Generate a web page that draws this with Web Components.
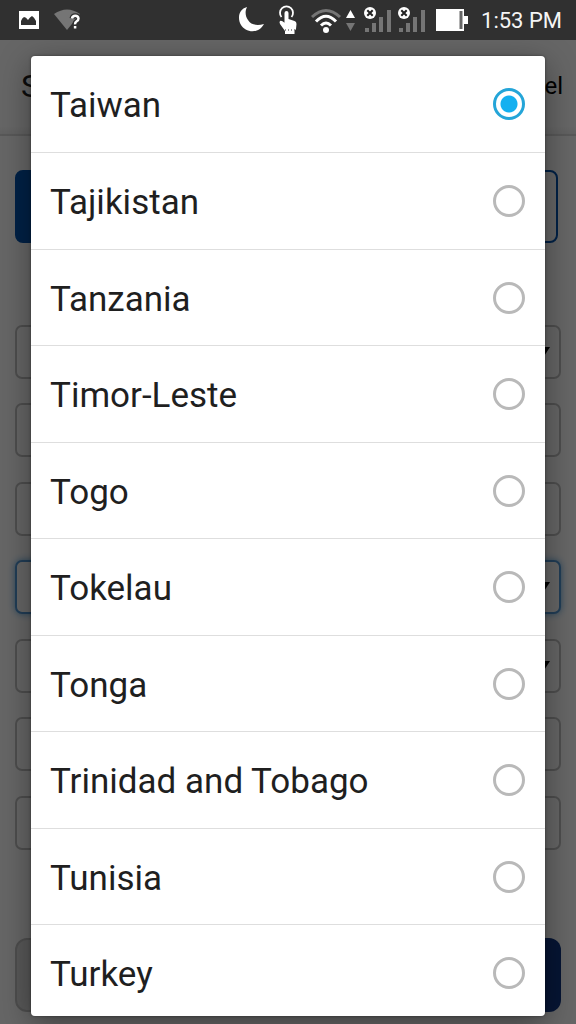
<!DOCTYPE html>
<html lang="en">
<head>
<meta charset="utf-8">
<meta name="viewport" content="width=device-width, initial-scale=1">
<title>Choose a country</title>
<style>
html, body { height: 100%; margin: 0; }
body { font-family: Roboto, "Noto Sans", sans-serif; color: #1f1f1f; background: #fff; overflow: hidden; }
</style>
</head>
<body>
<phone-screen>
  <status-bar slot="status" time="1:53 PM"></status-bar>
  <address-form slot="page"></address-form>
  <choice-dialog slot="dialog" label="Country" selected="Taiwan"
    options="Taiwan,Tajikistan,Tanzania,Timor-Leste,Togo,Tokelau,Tonga,Trinidad and Tobago,Tunisia,Turkey"></choice-dialog>
</phone-screen>
<script>
class BaseElement extends HTMLElement {
  connectedCallback() {
    if (this.shadowRoot) return;
    this.attachShadow({ mode: 'open' }).innerHTML = this.render();
  }
}

customElements.define('phone-screen', class extends BaseElement {
  render() {
    return `<style>
      :host { display: flex; flex-direction: column; height: 100%; }
      main { flex: 1; min-height: 0; display: grid; grid-template: minmax(0, 1fr) / minmax(0, 1fr); }
      .page, .scrim { grid-area: 1 / 1; min-height: 0; overflow: hidden; }
      .scrim { z-index: 1; display: grid; grid-template: minmax(0, 1fr) / minmax(0, 1fr);
        box-sizing: border-box; padding: 16px 31px 8px; background: rgba(0, 0, 0, .6); }
    </style>
    <slot name="status"></slot>
    <main>
      <div class="page"><slot name="page"></slot></div>
      <div class="scrim"><slot name="dialog"></slot></div>
    </main>`;
  }
});

customElements.define('status-bar', class extends BaseElement {
  render() {
    const signal = `<svg width="30" height="28" viewBox="0 0 30 28">
      <g fill="#757575"><rect x="1" y="22" width="4" height="4"/><rect x="8" y="17" width="4" height="9"/>
      <rect x="15" y="11" width="4" height="15"/><rect x="23" y="4" width="4" height="22"/></g>
      <circle cx="6" cy="7" r="6" fill="#fff"/><path d="M3.300 4.300l5.400 5.400M8.700 4.300l-5.400 5.400" stroke="#222" stroke-width="2"/></svg>`;
    return `<style>
      :host { display: flex; align-items: center; height: 40px; flex: none; box-sizing: border-box;
        padding: 0 14px 0 18px; background: #303030; color: #f5f5f5; }
      svg { display: block; flex: none; }
      .left, .right { display: flex; align-items: center; }
      .left { flex: 1; gap: 14px; }
      .moon { margin-right: 12px; }
      .touch { margin-right: 12px; }
      .wifi { margin-right: 4px; }
      .arrows { margin-right: 9px; }
      .battery { margin: 0 13px 0 8px; }
      .signals { display: flex; gap: 4px; }
      time { font-size: 22px; line-height: 40px; padding-top: 2px; }
    </style>
    <div class="left">
      <svg width="22" height="20" viewBox="0 0 22 20"><rect x="1" y="1" width="20" height="18" fill="#fff"/>
        <path d="M3 15v-4q1-3 3-4 2 0 4 3 2-3 4-4 2 1 4 5v4z" fill="#303030"/></svg>
      <svg width="28" height="24" viewBox="0 0 28 24"><path d="M0 6Q13-3 26 6L13 22z" fill="#757575"/>
        <path d="M18 10.500q.5-2.700 3.300-2.700t3.200 2.700q0 1.600-1.800 2.800t-1.600 3M21.100 18v2.800" fill="none" stroke="#303030" stroke-width="5"/>
        <path d="M18 10.500q.5-2.700 3.300-2.700t3.200 2.700q0 1.600-1.800 2.800t-1.600 3M21.100 18v2.500" fill="none" stroke="#fff" stroke-width="2.500"/></svg>
    </div>
    <div class="right">
      <svg class="moon" width="28" height="28" viewBox="0 0 28 28"><path d="M9 1C1 3-1 12 3 19c4 7 17 10 23-1C19 20 13 19 10 14 7 10 7 5 9 1z" fill="#fff"/></svg>
      <svg class="touch" width="20" height="30" viewBox="0 0 20 30"><path d="M3.500 12A6.500 6.500 0 1 1 13.500 12" fill="none" stroke="#fff" stroke-width="1.800"/>
        <path d="M6.500 8q0-2 2-2t2 2v6l6 2q2 .5 2 3l-.5 5-1.500 2v3H7v-3l-5-7q-1-2 0-3 1-.8 2.500.3l2 1.500z" fill="#fff"/>
        <path d="M7 25h10" stroke="#303030" stroke-dasharray="1 2"/></svg>
      <svg class="wifi" width="32" height="28" viewBox="0 0 32 28" fill="none" stroke-width="3">
        <path d="M2 11Q16-2 30 11" stroke="#757575"/><path d="M6 15.500Q16 5 26 15.500M11 19.500q5-5 10 0" stroke="#fff"/><circle cx="16" cy="24" r="3" fill="#fff" stroke="none"/></svg>
      <svg class="arrows" width="9" height="24" viewBox="0 0 9 24"><path d="M4.500 2L9 10H0z" fill="#fff"/><path d="M4.500 23L9 15H0z" fill="#757575"/></svg>
      <div class="signals">${signal}${signal}</div>
      <svg class="battery" width="32" height="22" viewBox="0 0 32 22"><path d="M0 0h28v7h4v8h-4v7H0z" fill="#fff"/><path d="M25 2v18" stroke="#666" stroke-width="3"/></svg>
      <time>${this.getAttribute('time')}</time>
    </div>`;
  }
});

customElements.define('form-field', class extends BaseElement {
  render() {
    const name = this.getAttribute('label');
    const select = this.hasAttribute('select');
    return `<style>
      :host { display: block; }
      div { display: grid; align-items: center; }
      input, select { grid-area: 1 / 1; appearance: none; box-sizing: border-box; width: 100%; height: 54px; margin: 0;
        padding: 0 16px; border: 2px solid #c4c4c4; border-radius: 7px; background: #fff; font: 20px Roboto, sans-serif; outline: none; }
      :host([active]) select { border-color: #5499d8; box-shadow: 0 0 7px #66afe9; }
      svg { grid-area: 1 / 1; justify-self: end; margin-right: 11px; pointer-events: none; }
    </style>
    <div>${select
      ? `<select aria-label="${name}"></select><svg width="13" height="10" viewBox="0 0 13 10"><path d="M0 0h13L6.500 10z"/></svg>`
      : `<input type="text" aria-label="${name}">`}</div>`;
  }
});

customElements.define('address-form', class extends BaseElement {
  render() {
    return `<style>
      :host { display: block; }
      header { display: flex; align-items: center; justify-content: space-between; height: 96px; box-sizing: border-box;
        padding: 0 13px 2px 21px; border-bottom: 2px solid #dcdcdc; background: linear-gradient(#fff 92%, #f2f2f2); }
      h1 { margin: 0; font-size: 32px; line-height: 40px; font-weight: 400; }
      button { margin: 0; padding: 0; border: 0; background: none; color: #000; font: 24px Roboto, sans-serif; }
      .tabs { display: grid; grid-template-columns: 1fr 1fr; margin: 34px 18px 82px 15px; }
      .tabs button { height: 73px; border: 2px solid #0053b0; border-radius: 0 8px 8px 0; }
      .tabs .on { border-radius: 8px 0 0 8px; background: #0053b0; }
      .fields { display: grid; gap: 24px; padding: 0 15px; }
      .fields :nth-child(even) { margin-bottom: 1px; }
      .actions { display: grid; grid-template-columns: 1fr 1fr; gap: 20px; padding: 88px 15px 11px; }
      .actions button { height: 74px; border-radius: 12px; background: #103682; }
      .actions .back { border: 2px solid #c4c4c4; background: #dedede; }
    </style>
    <header><h1>S</h1><button type="button">Cancel</button></header>
    <div class="tabs"><button type="button" class="on" aria-label="First tab"></button><button type="button" aria-label="Second tab"></button></div>
    <div class="fields">
      <form-field label="Title" select></form-field>
      <form-field label="First name"></form-field>
      <form-field label="Last name"></form-field>
      <form-field label="Country" select active></form-field>
      <form-field label="Region" select></form-field>
      <form-field label="City"></form-field>
      <form-field label="Street"></form-field>
    </div>
    <div class="actions"><button type="button" class="back" aria-label="Back"></button><button type="button" aria-label="Next"></button></div>`;
  }
});

customElements.define('choice-dialog', class extends BaseElement {
  render() {
    const selected = this.getAttribute('selected');
    const rows = this.getAttribute('options').split(',').map(name => `
      <label><span>${name}</span><input type="radio" name="choice" value="${name}"${name === selected ? ' checked' : ''}></label>`).join('');
    return `<style>
      :host { display: block; overflow: hidden auto; scrollbar-width: none; border-radius: 4px; background: #fff;
        box-shadow: 0 8px 32px rgba(0, 0, 0, .4), 0 0 3px rgba(0, 0, 0, .4); }
      label { display: flex; align-items: center; justify-content: space-between; height: 96px; box-sizing: border-box;
        padding: 0 20px 0 19px; font-size: 35px; line-height: 44px; color: #1f1f1f; }
      label:nth-child(even) { height: 97px; }
      label + label { border-top: 1px solid #dedede; }
      span { padding-top: 4px; }
      input { appearance: none; box-sizing: border-box; width: 32px; height: 32px; margin: 0; flex: none;
        border: 3px solid #b9b9b9; border-radius: 50%; }
      input:checked { border-color: #24a5d8; background: radial-gradient(circle, #14b0f0 8px, transparent 9px); }
    </style>
    <div role="radiogroup" aria-label="${this.getAttribute('label')}">${rows}</div>`;
  }
});
</script>
</body>
</html>
